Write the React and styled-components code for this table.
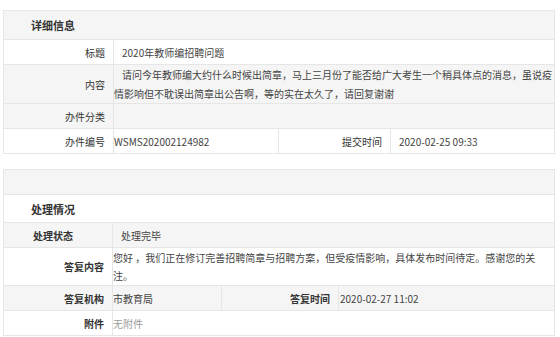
import React from 'react'
import styled, { createGlobalStyle } from 'styled-components'

const GlobalStyle = createGlobalStyle`
  body {
    margin: 0;
    background: #fff;
    font-family: "Noto Sans CJK SC", "Noto Sans", sans-serif;
    color: #333;
  }
`

const Page = styled.div`
  width: 560px;
  padding: 10px 5px 0 3px;
  box-sizing: border-box;
`

const Table = styled.div`
  border-top: 1px solid #e6e6e6;
  border-left: 1px solid #e6e6e6;
  margin-bottom: ${p => p.$gap || 0}px;
`

const Row = styled.div`
  display: grid;
  grid-template-columns: ${p => p.$cols || '1fr'};
  height: ${p => p.$h}px;
  background: ${p => (p.$gray ? '#f5f5f5' : '#fff')};
  border-bottom: 1px solid #e6e6e6;
  border-right: 1px solid #e6e6e6;
`

const Title = styled.div`
  display: flex;
  align-items: center;
  padding-left: 27px;
  font-size: 11px;
  font-weight: bold;
  color: #333;
`

const Label = styled.div`
  display: flex;
  align-items: center;
  justify-content: ${p => (p.$center ? 'center' : 'flex-end')};
  padding: ${p => (p.$center ? '0 10px 0 0' : '0 8px 0 0')};
  border-right: 1px solid #e6e6e6;
  font-size: 10px;
  font-weight: ${p => (p.$bold ? 'bold' : 'normal')};
  color: #333;
  white-space: nowrap;
`

const Value = styled.div`
  display: flex;
  align-items: center;
  padding-left: ${p => p.$pad ?? 8}px;
  border-right: ${p => (p.$last ? 'none' : '1px solid #e6e6e6')};
  font-size: 10px;
  color: ${p => (p.$muted ? '#999' : '#444')};
  white-space: nowrap;
`

const Para = styled.div`
  padding: ${p => p.$top || 0}px 0 0 0;
  font-size: 10px;
  line-height: ${p => p.$lh}px;
  color: #444;
  text-indent: ${p => p.$indent || 0}px;
  white-space: ${p => (p.$fixed ? 'nowrap' : 'normal')};
`

const TOP = '110px 165px 112px 1fr'
const BOTTOM = '109px 109px 117px 1fr'

export default function App () {
  return (
    <Page>
      <GlobalStyle />
      <Table $gap={15}>
        <Row $h={28} $gray><Title>详细信息</Title></Row>
        <Row $h={24} $cols='110px 1fr'>
          <Label>标题</Label>
          <Value $last>2020年教师编招聘问题</Value>
        </Row>
        <Row $h={38} $cols='110px 1fr' $gray>
          <Label>内容</Label>
          <Para $lh={19} $indent={8} $fixed>
            请问今年教师编大约什么时候出简章，马上三月份了能否给广大考生一个稍具体点的消息，虽说疫<br />
            情影响但不耽误出简章出公告啊，等的实在太久了，请回复谢谢
          </Para>
        </Row>
        <Row $h={24} $cols='110px 1fr' $gray>
          <Label>办件分类</Label>
          <Value $last />
        </Row>
        <Row $h={24} $cols={TOP}>
          <Label>办件编号</Label>
          <Value $pad={0}>WSMS202002124982</Value>
          <Label>提交时间</Label>
          <Value $last>2020-02-25 09:33</Value>
        </Row>
      </Table>

      <Table>
        <Row $h={24} $gray />
        <Row $h={27}><Title>处理情况</Title></Row>
        <Row $h={24} $cols='109px 1fr' $gray>
          <Label $bold $center>处理状态</Label>
          <Value $last>处理完毕</Value>
        </Row>
        <Row $h={37} $cols='109px 1fr'>
          <Label $bold>答复内容</Label>
          <Para $lh={18} $top={1}>
            您好 ，我们正在修订完善招聘简章与招聘方案，但受疫情影响，具体发布时间待定。感谢您的关注。
          </Para>
        </Row>
        <Row $h={24} $cols={BOTTOM} $gray>
          <Label $bold>答复机构</Label>
          <Value $pad={0}>市教育局</Value>
          <Label $bold>答复时间</Label>
          <Value $last $pad={1}>2020-02-27 11:02</Value>
        </Row>
        <Row $h={24} $cols='109px 1fr'>
          <Label $bold>附件</Label>
          <Value $last $pad={0} $muted>无附件</Value>
        </Row>
      </Table>
    </Page>
  )
}
